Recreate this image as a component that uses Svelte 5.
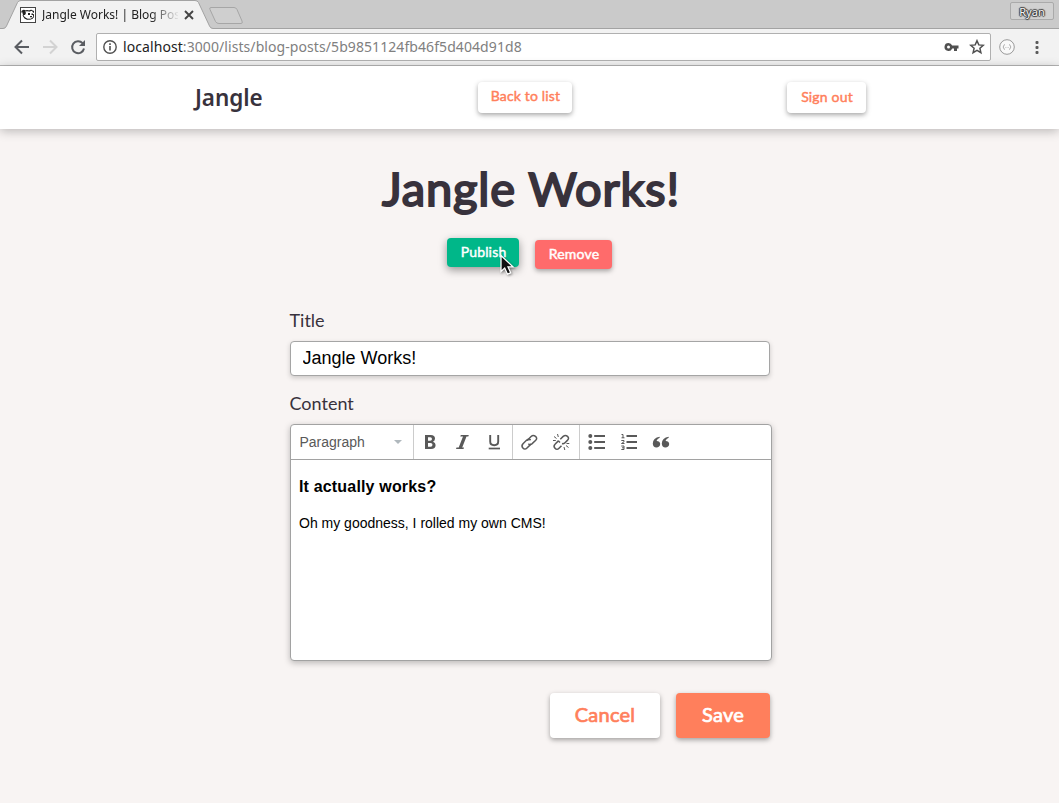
<script>
  let title = $state('Jangle Works!');
</script>

<div class="window">
  <div class="tabstrip">
    <svg class="tabshape" width="250" height="29" viewBox="0 0 250 29">
      <path d="M0 28.5H3Q5.500 28.500 6.500 26L17.500 2.500Q18.500 .5 21 .5H195Q197.500 .5 198.500 2.500L209.500 26Q210.500 28.500 213 28.500H250V30H0Z" fill="#f2f2f2" stroke="#a3a3a3" />
      <path d="M211 7.500H234Q236 7.500 237 9.500L242 21Q243 23.500 241 23.500H219Q216.500 23.500 215.500 21.500L210 9.500Q209 7.500 211 7.500Z" fill="#cfcfcf" stroke="#a6a6a6" />
      <path d="M213 28.500H250" stroke="#a3a3a3" /><path d="M214 29.500H250" stroke="#f2f2f2" />
    </svg>
    <div class="tab">
      <svg class="favicon" width="16" height="16" viewBox="0 0 16 16">
        <rect x=".5" y=".5" width="15" height="15" fill="#fff" stroke="#444" />
        <path d="M2 5.500Q1.500 4 3 3.500 4.500 3 5 4 7 3.300 9.500 4 10.500 3 12 3.500" fill="none" stroke="#222" stroke-width="1.200" />
        <path d="M2 4H5L6 6 5 8H3ZM12 3 14 4V6L12.500 5ZM8 6H10V8H8ZM11.500 6.500H13V8H11.500ZM10 9H12V10.300H10Z" fill="#222" />
        <path d="M3 8Q3.500 11 7 12.200 11 12.800 13 11 14 9.500 13.300 7" fill="none" stroke="#222" stroke-width="1" />
        <path d="M3 9 6 11 8 12.500 5 12Z" fill="#222" />
      </svg>
      <span class="tabtitle">Jangle Works! | Blog Pos</span>
      <svg width="10" height="10" viewBox="0 0 10 10"><path d="M1 1 9 9M9 1 1 9" stroke="#444" stroke-width="1.900" /></svg>
    </div>
    <div class="profile">Ryan</div>
  </div>

  <div class="toolbar">
    <svg class="nav" width="90" height="36" viewBox="0 0 90 36" fill="none" stroke-width="2">
      <path d="M29 18H16M22 11.500 15.500 18 22 24.500" stroke="#5a5d62" />
      <path d="M43 18H56M50 11.500 56.500 18 50 24.500" stroke="#d3d3d3" />
      <path d="M82.600 14.200A6 6 0 1 0 84 19.500" stroke="#5a5d62" />
      <path d="M85 11V17H79Z" fill="#5a5d62" />
    </svg>
    <div class="address">
      <svg width="14" height="14" viewBox="0 0 14 14"><circle cx="7" cy="7" r="6.200" fill="none" stroke="#505050" stroke-width="1.400" /><path d="M7 6V10.500M7 3.300V4.900" stroke="#505050" stroke-width="1.600" /></svg>
      <span class="url"><b>localhost</b>:3000/lists/blog-posts/5b9851124fb46f5d404d91d8</span>
      <svg width="15" height="10" viewBox="0 0 15 10"><path fill="#505050" fill-rule="evenodd" d="M4.500 1A4 4 0 1 0 8.200 6.500H10V9H13V6.500H14.500V3.500H8.200A4 4 0 0 0 4.500 1ZM4.500 3.500A1.500 1.500 0 1 1 4.500 6.500 1.500 1.500 0 0 1 4.500 3.500Z" /></svg>
      <svg class="star" width="16" height="16" viewBox="0 0 16 16"><path d="M8 1.700 9.800 5.900 14.300 6.300 10.900 9.300 11.900 13.700 8 11.400 4.100 13.700 5.100 9.300 1.700 6.300 6.200 5.900Z" fill="none" stroke="#505050" stroke-width="1.500" /></svg>
    </div>
    <svg class="ext" width="16" height="16" viewBox="0 0 16 16" fill="none" stroke="#999"><circle cx="8" cy="8" r="7.300" fill="#f9f9f9" /><path d="M5.800 5.500Q4.800 5.500 4.800 7L4 8 4.800 9Q4.800 10.500 5.800 10.500M10.200 5.500Q11.200 5.500 11.200 7L12 8 11.200 9Q11.200 10.500 10.200 10.500" stroke-width=".8" /><path d="M6.500 8.500H7.300M8.700 8.500H9.500" stroke-width=".8" /></svg>
    <svg width="4" height="14" viewBox="0 0 4 14" fill="#5a5a5a"><rect x=".5" y="1" width="3" height="3" rx="1" /><rect x=".5" y="6" width="3" height="3" rx="1" /><rect x=".5" y="11" width="3" height="3" rx="1" /></svg>
  </div>

  <header>
    <span class="brand">Jangle</span>
    <button class="btn white back"><span>Back to list</span></button>
    <button class="btn white signout"><span>Sign out</span></button>
  </header>

  <main>
    <h1>Jangle Works!</h1>
    <div class="actions">
      <button class="btn publish"><span>Publish</span>
        <svg class="cursor" width="18" height="24" viewBox="0 0 18 24"><path d="M2 1.500V17.500L5.700 14 8.500 20.200 11.700 18.800 9 12.800H14Z" fill="#111" stroke="#fff" stroke-width="1.300" /></svg>
      </button>
      <button class="btn remove"><span>Remove</span></button>
    </div>
    <div class="form">
      <label class="l1" for="title">Title</label>
      <input id="title" bind:value={title} />
      <label class="l2" for="content">Content</label>
      <div class="editor">
        <div class="tools">
          <div class="select"><span>Paragraph</span><svg width="8" height="4" viewBox="0 0 8 4"><path d="M0 0H8L4 4Z" fill="#b0b8bd" /></svg></div>
          <div class="group three">
            <svg viewBox="0 0 20 20"><path d="M5 3H10.800Q15 3 15 6.500 15 8.700 13 9.700 15.600 10.500 15.600 13 15.600 17 11 17H5ZM8 5.300V8.700H10.200Q12 8.700 12 7 12 5.300 10.200 5.300ZM8 11V14.700H10.600Q12.500 14.700 12.500 12.800 12.500 11 10.600 11Z" fill="#595959" fill-rule="evenodd" /></svg>
            <svg viewBox="0 0 20 20"><path d="M8.800 3H16.800L16.300 4.500H14.500L10.200 15.500H12L11.500 17H4L4.500 15.500H6.700L11 4.500H8.300Z" fill="#595959" /></svg>
            <svg viewBox="0 0 20 20" fill="none" stroke="#595959"><path d="M6.200 3V9.500Q6.200 13.200 10.200 13.200T14.200 9.500V3" stroke-width="1.900" /><path d="M4.700 16.500H16" stroke-width="1.700" /></svg>
          </div>
          <div class="group two">
            <svg viewBox="0 0 20 20" fill="none" stroke="#595959" stroke-width="1.500"><path d="M8.200 8.600 12.100 4.500Q14.200 2.500 16.500 4.400T16.500 8.500L12.900 11.800Q11.200 13.100 9.300 11.800" /><path d="M11.800 7.900Q9.500 6.700 7.500 8.300L4 11.700Q2 13.800 3.900 16T8 16L12 12.100" /></svg>
            <svg viewBox="0 0 20 20" fill="none" stroke="#595959" stroke-width="1.500"><path d="M9.300 7.300 12.200 4.400Q14.400 2.500 16.500 4.400T16.400 8.400L13.500 11.200Q12.400 12 11 11.500M7.600 8.600 4 12.200Q2.100 14 4 16.200T8 16.200L10.500 13.700M9 10.500 7.500 9" /><path d="M6.500 2 7.300 5M3 4.500 5.500 6.500M2 8.500H4.800M13 15 13.800 18M15 13.500 17.500 15.500M15.500 11.500H18.300" stroke-width="1" /></svg>
          </div>
          <div class="group last">
            <svg viewBox="0 0 20 20" fill="#595959"><circle cx="3.300" cy="4" r="2" /><circle cx="3.300" cy="10" r="2" /><circle cx="3.300" cy="16" r="2" /><path d="M7.200 3.100H18V4.900H7.200ZM7.200 9.100H18V10.900H7.200ZM7.200 15.100H18V16.900H7.200Z" /></svg>
            <svg viewBox="0 0 20 20" fill="none" stroke="#595959"><path d="M7.500 4H18M7.500 10H18M7.500 16H18" stroke-width="1.800" /><path d="M2.500 2.500H4V6M2.500 5.800H5.500M2.300 8.500H5V9.800L2.500 11.500H5.500M2.300 14H5V17.500H2.300M3 15.800H5" stroke-width="1" /></svg>
            <svg viewBox="0 0 20 20" fill="#595959"><path d="M8.700 4.800Q2 5.800 1.800 11.600C1.800 14 3.300 15.600 5.400 15.600 7.500 15.600 9.200 14 9.200 12 9.200 10 7.500 8.800 5.500 8.900Q6.300 6.500 8.700 5.800ZM17.700 4.800Q11 5.800 10.800 11.600C10.800 14 12.300 15.600 14.400 15.600 16.500 15.600 18.200 14 18.200 12 18.200 10 16.500 8.800 14.500 8.900Q15.300 6.500 17.700 5.800Z" /></svg>
          </div>
        </div>
        <div class="body" id="content">
          <h3>It actually works?</h3>
          <p>Oh my goodness, I rolled my own CMS!</p>
        </div>
      </div>
      <div class="footer">
        <button class="btn white cancel"><span>Cancel</span></button>
        <button class="btn save"><span>Save</span></button>
      </div>
    </div>
  </main>
</div>

<style>
  :global(body) { margin: 0; overflow: hidden; }
  .window { box-sizing: border-box; width: 1059px; height: 803px; display: flex; flex-direction: column; background: #f8f4f3; color: #38323c; overflow: hidden; }
  svg { display: block; flex: none; }
  .tabstrip { height: 29px; flex: none; box-sizing: border-box; position: relative; display: flex; justify-content: space-between; background: #cacaca; border-bottom: 1px solid #a3a3a3; }
  .tabshape { position: absolute; left: 0; top: 0; }
  .tab { position: relative; display: flex; align-items: center; padding: 2px 0 0 20px; height: 27px; box-sizing: border-box; }
  .tabtitle { width: 136px; margin: 0 6px 0 6px; white-space: nowrap; font: 12px/20px "Noto Sans", sans-serif; color: #222; -webkit-mask-image: linear-gradient(to right, #000 108px, transparent 138px); mask-image: linear-gradient(to right, #000 108px, transparent 138px); }
  .profile { box-sizing: border-box; width: 44px; height: 18px; margin: 2px 5px 0 0; border: 1px solid #aaa; border-radius: 2px; background: #d1d1d1; font: 11px/17px "Noto Sans", sans-serif; text-align: center; color: #f4f4f4; text-shadow: 1px 0 1px #333, -1px 0 1px #333, 0 1px 1px #333, 0 -1px 1px #333; }
  .toolbar { height: 37px; flex: none; box-sizing: border-box; display: flex; align-items: center; background: #f2f2f2; border-bottom: 1px solid #b6b6b6; }
  .nav { margin-right: 6px; }
  .address { box-sizing: border-box; width: 895px; height: 28px; display: flex; align-items: center; padding: 0 5px 0 6px; background: #fff; border: 1px solid #b0b0b0; border-radius: 2px; }
  .url { flex: 1; margin-left: 6px; font: 14px/24px "Noto Sans", sans-serif; letter-spacing: .077px; color: #808080; white-space: nowrap; }
  .url b { font-weight: 400; color: #222; }
  .star { margin-left: 10px; }
  .ext { margin: 0 20px 0 8px; }
  header { height: 63px; flex: none; position: relative; display: flex; align-items: flex-start; background: #fff; box-shadow: 0 2px 10px rgba(0, 0, 0, .26); }
  .brand { width: 283px; padding: 15px 0 0 195px; box-sizing: content-box; font: 600 22.500px/34px "Noto Sans", sans-serif; letter-spacing: -.1px; white-space: nowrap; }
  .btn { box-sizing: border-box; position: relative; display: flex; justify-content: center; align-items: center; flex: none; padding: 0 0 2px 1px; border: 0; border-radius: 4px; font: 400 14px/20px Lato, sans-serif; letter-spacing: .17px; -webkit-text-stroke: .45px currentColor; color: #fff; white-space: nowrap; box-shadow: 0 2px 5px rgba(0, 0, 0, .35); }
  .white { background: #fff; color: #ff7f5c; }
  header .btn { height: 31px; margin-top: 16px; }
  .back { width: 94px; padding-bottom: 4px; }
  .signout { width: 79px; margin-left: 215px; }
  main { display: flex; flex-direction: column; align-items: center; }
  h1 { margin: 29px 0 0; padding-left: 3px; font: 400 47px/60px Lato, sans-serif; letter-spacing: .85px; -webkit-text-stroke: 2px #38323c; stroke-linejoin: round; white-space: nowrap; }
  .actions { display: flex; align-items: flex-start; gap: 16px; height: 33px; margin: 20px 0 0; }
  .publish { width: 72px; height: 29px; background: #00b789; box-shadow: 0 3px 8px rgba(0, 0, 0, .4); }
  .remove { width: 77px; height: 29px; margin-top: 2px; background: #ff6b6b; }
  .cursor { position: absolute; left: 52px; top: 16px; filter: drop-shadow(1px 1px 1px rgba(0, 0, 0, .4)); }
  .form { width: 480px; display: flex; flex-direction: column; margin-top: 36px; }
  label { font: 18px/27px Lato, sans-serif; }
  .l2 { margin-top: 14px; }
  input { box-sizing: border-box; width: 480px; height: 35px; margin-top: 7px; padding: 0 12px; border: 1px solid #a5a5a5; border-radius: 4px; font: 18px "Liberation Sans", Arial, sans-serif; color: #000; background: #fff; box-shadow: 0 2px 5px rgba(0, 0, 0, .18); outline: none; }
  .editor { box-sizing: border-box; width: 482px; height: 237px; margin-top: 7px; border: 1px solid #a2a2a2; border-radius: 4px; background: #fff; box-shadow: 0 2px 6px rgba(0, 0, 0, .25); }
  .tools { height: 34px; display: flex; border-bottom: 1px solid #a2a2a2; }
  .select { width: 122px; box-sizing: border-box; display: flex; align-items: center; justify-content: space-between; padding: 0 11px 0 9px; font: 14px "Liberation Sans", Arial, sans-serif; color: #595959; }
  .group { display: flex; align-items: center; gap: 12px; border-left: 1px solid #ccc; box-sizing: border-box; padding-left: 6px; }
  .group svg { width: 20px; height: 20px; }
  .three { width: 99px; }
  .two { width: 67px; }
  .last { padding-left: 7px; }
  .body { padding: 17px 8px 16px 8.500px; font: 14px/20px "Liberation Sans", Arial, sans-serif; color: #000; }
  h3 { margin: 0; font-size: 16px; line-height: 20px; letter-spacing: .17px; }
  p { margin: 16px 0 0; }
  .footer { display: flex; justify-content: flex-end; gap: 16px; margin-top: 32px; }
  .footer .btn { height: 45px; padding-bottom: 3px; font-size: 20px; -webkit-text-stroke-width: .7px; letter-spacing: .25px; }
  .cancel { width: 110px; }
  .save { width: 94px; background: #ff7f5c; }
</style>
